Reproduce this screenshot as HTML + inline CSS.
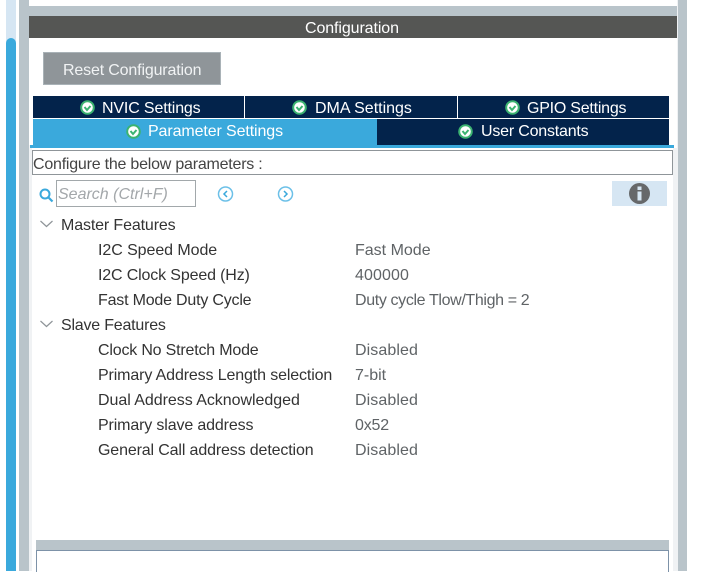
<!DOCTYPE html>
<html><head><meta charset="utf-8"><style>
html,body{margin:0;padding:0;background:#fff}
body{width:712px;height:571px;overflow:hidden;position:relative;font-family:"Liberation Sans",sans-serif;font-size:16px;color:#333}
.a{position:absolute}
.t{position:absolute;white-space:nowrap;line-height:20px;height:20px}
.v{color:#5f6366}
.w{color:#fff}
svg{position:absolute;overflow:visible}
</style></head><body>
<div class="a" style="left:6px;top:0;width:10px;height:571px;background:#d6e6f3"></div>
<div class="a" style="left:6px;top:38px;width:10px;height:533px;background:#3aa9dc;border-radius:5px 5px 0 0"></div>
<div class="a" style="left:19px;top:0;width:10px;height:571px;background:#b9c4ca"></div>
<div class="a" style="left:29px;top:145px;width:3px;height:426px;background:#f0f2f4"></div>
<div class="a" style="left:673px;top:148px;width:5px;height:423px;background:#f0f2f4"></div>
<div class="a" style="left:677px;top:0;width:1px;height:148px;background:#f0f2f4"></div>
<div class="a" style="left:678px;top:0;width:9px;height:571px;background:#b9c4ca"></div>
<div class="a" style="left:29px;top:6px;width:648px;height:10px;background:#b9c4ca"></div>
<div class="a" style="left:29px;top:16px;width:648px;height:22px;background:#555654"></div>
<div class="t w" style="left:305px;top:19px;letter-spacing:-.1px">Configuration</div>

<div class="a" style="left:43px;top:52px;width:176px;height:31px;background:#8f9599;border:1px solid #a9b2b7"></div>
<div class="t" style="left:63px;top:61px;color:#f1f3f4;letter-spacing:-.16px">Reset Configuration</div>

<div class="a" style="left:33px;top:96px;width:636px;height:22px;background:#03234b"></div>
<div class="a" style="left:244px;top:96px;width:1px;height:22px;background:#fff"></div>
<div class="a" style="left:457px;top:96px;width:1px;height:22px;background:#fff"></div>
<div class="a" style="left:33px;top:119px;width:344px;height:26px;background:#3aa9dc"></div>
<div class="a" style="left:377px;top:119px;width:292px;height:26px;background:#03234b"></div>
<div class="a" style="left:30px;top:145px;width:644px;height:3px;background:#3aa9dc"></div>

<svg style="left:80px;top:100px" width="15" height="15" viewBox="0 0 15 15"><circle cx="7.500" cy="7.500" r="6.300" fill="#fff" stroke="#3cb371" stroke-width="2"/><path d="M4.500 7l2.500 3 3.500-4" fill="none" stroke="#3cb371" stroke-width="2"/></svg>
<svg style="left:292px;top:100px" width="15" height="15" viewBox="0 0 15 15"><circle cx="7.500" cy="7.500" r="6.300" fill="#fff" stroke="#3cb371" stroke-width="2"/><path d="M4.500 7l2.500 3 3.500-4" fill="none" stroke="#3cb371" stroke-width="2"/></svg>
<svg style="left:505px;top:100px" width="15" height="15" viewBox="0 0 15 15"><circle cx="7.500" cy="7.500" r="6.300" fill="#fff" stroke="#3cb371" stroke-width="2"/><path d="M4.500 7l2.500 3 3.500-4" fill="none" stroke="#3cb371" stroke-width="2"/></svg>
<svg style="left:126px;top:124px" width="15" height="15" viewBox="0 0 15 15"><circle cx="7.500" cy="7.500" r="6.300" fill="#fff" stroke="#3cb371" stroke-width="2"/><path d="M4.500 7l2.500 3 3.500-4" fill="none" stroke="#3cb371" stroke-width="2"/></svg>
<svg style="left:458px;top:124px" width="15" height="15" viewBox="0 0 15 15"><circle cx="7.500" cy="7.500" r="6.300" fill="#fff" stroke="#3cb371" stroke-width="2"/><path d="M4.500 7l2.500 3 3.500-4" fill="none" stroke="#3cb371" stroke-width="2"/></svg>

<div class="t w" style="left:102px;top:99px;letter-spacing:-.15px">NVIC Settings</div>
<div class="t w" style="left:315px;top:99px">DMA Settings</div>
<div class="t w" style="left:527px;top:99px;letter-spacing:-.23px">GPIO Settings</div>
<div class="t w" style="left:148px;top:122px;letter-spacing:-.11px">Parameter Settings</div>
<div class="t w" style="left:481px;top:122px;letter-spacing:-.2px">User Constants</div>

<div class="a" style="left:32px;top:150px;width:639px;height:23px;border:1px solid #8f9599;background:#fff"></div>
<div class="t" style="left:33px;top:155px;color:#444;letter-spacing:-.22px">Configure the below parameters :</div>

<svg style="left:39px;top:188px" width="15" height="15" viewBox="0 0 15 15"><circle cx="6" cy="6" r="4.500" fill="none" stroke="#3aa9dc" stroke-width="2"/><path d="M9.500 9.500L13.500 13.500" stroke="#3aa9dc" stroke-width="2.200"/></svg>
<div class="a" style="left:56px;top:180px;width:138px;height:25px;border:1px solid #a2a8ab;background:#fff"></div>
<div class="t" style="left:58px;top:185px;color:#a3a7aa;font-style:italic">Search (Ctrl+F)</div>
<svg style="left:217px;top:186px" width="17" height="17" viewBox="0 0 17 17"><circle cx="8.500" cy="8" r="7" fill="none" stroke="#6cc0e8" stroke-width="1.500"/><path d="M10 5L7 8l3 3" fill="none" stroke="#3aa9dc" stroke-width="1.500"/></svg>
<svg style="left:277px;top:186px" width="17" height="17" viewBox="0 0 17 17"><circle cx="8.500" cy="8" r="7" fill="none" stroke="#6cc0e8" stroke-width="1.500"/><path d="M7 5l3 3-3 3" fill="none" stroke="#3aa9dc" stroke-width="1.500"/></svg>
<div class="a" style="left:612px;top:181px;width:55px;height:25px;background:#d6e6f3"></div>
<svg style="left:629px;top:183px" width="21" height="21" viewBox="0 0 21 21"><circle cx="10.500" cy="10.500" r="10.500" fill="#66686a"/><rect x="8.500" y="3.500" width="4" height="3.500" fill="#d6e6f3"/><rect x="8.500" y="8.500" width="4" height="9" fill="#d6e6f3"/></svg>

<svg style="left:40px;top:220px" width="13" height="8" viewBox="0 0 13 8"><path d="M.5 1l6 5.500 6-5.500" fill="none" stroke="#8f9599" stroke-width="1.200"/></svg>
<svg style="left:40px;top:320px" width="13" height="8" viewBox="0 0 13 8"><path d="M.5 1l6 5.500 6-5.500" fill="none" stroke="#8f9599" stroke-width="1.200"/></svg>

<div class="t" style="left:61px;top:216px;letter-spacing:-.13px">Master Features</div>
<div class="t" style="left:98px;top:241px;letter-spacing:-.07px">I2C Speed Mode</div><div class="t v" style="left:355px;top:241px">Fast Mode</div>
<div class="t" style="left:98px;top:266px;letter-spacing:-.15px">I2C Clock Speed (Hz)</div><div class="t v" style="left:355px;top:266px;letter-spacing:.1px">400000</div>
<div class="t" style="left:98px;top:291px;letter-spacing:-.2px">Fast Mode Duty Cycle</div><div class="t v" style="left:355px;top:291px;letter-spacing:-.36px">Duty cycle Tlow/Thigh = 2</div>
<div class="t" style="left:61px;top:316px;letter-spacing:-.21px">Slave Features</div>
<div class="t" style="left:98px;top:341px;letter-spacing:-.19px">Clock No Stretch Mode</div><div class="t v" style="left:355px;top:341px;letter-spacing:.1px">Disabled</div>
<div class="t" style="left:98px;top:366px;letter-spacing:-.13px">Primary Address Length selection</div><div class="t v" style="left:355px;top:366px">7-bit</div>
<div class="t" style="left:98px;top:391px;letter-spacing:-.04px">Dual Address Acknowledged</div><div class="t v" style="left:355px;top:391px;letter-spacing:.1px">Disabled</div>
<div class="t" style="left:98px;top:416px;letter-spacing:-.14px">Primary slave address</div><div class="t v" style="left:355px;top:416px;letter-spacing:-.2px">0x52</div>
<div class="t" style="left:98px;top:441px;letter-spacing:-.14px">General Call address detection</div><div class="t v" style="left:355px;top:441px;letter-spacing:.1px">Disabled</div>

<div class="a" style="left:36px;top:540px;width:633px;height:10px;background:#b9c4ca"></div>
<div class="a" style="left:36px;top:550px;width:631px;height:21px;border:1px solid #7d92a8;border-bottom:0;background:#fff"></div>
</body></html>
